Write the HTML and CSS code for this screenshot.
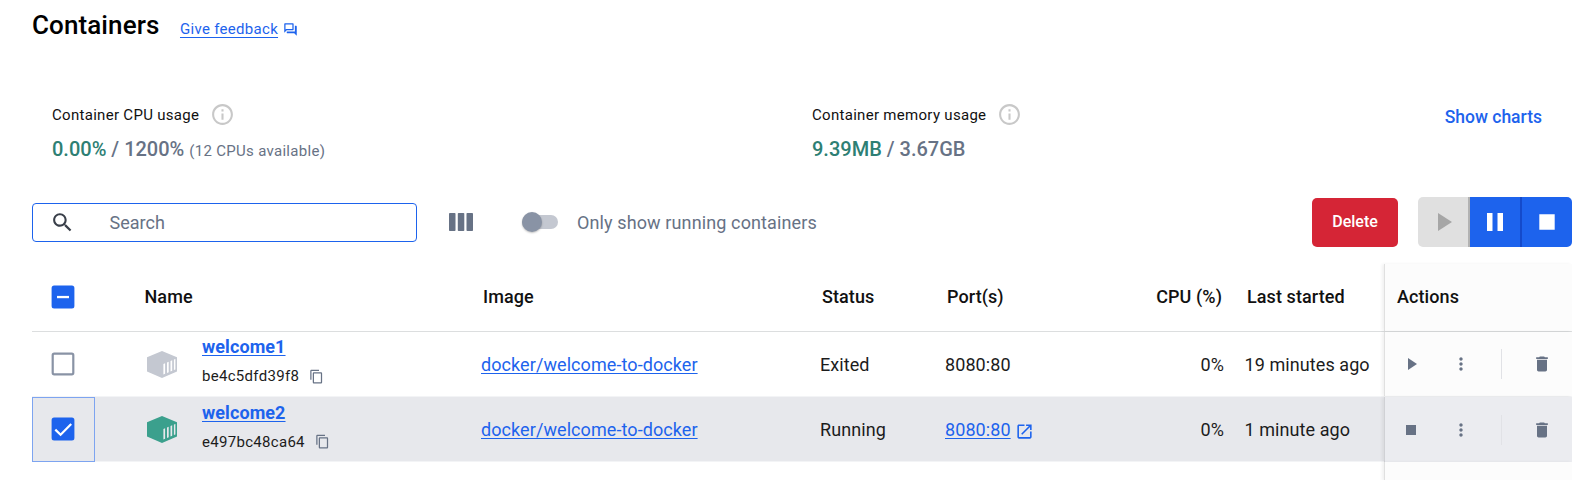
FILE: index.html
```
<!DOCTYPE html>
<html lang="en">
<head>
<meta charset="utf-8">
<title>Containers</title>
<link rel="stylesheet" href="styles.css">
</head>
<body>
<svg class="sprite" aria-hidden="true">
  <symbol id="info" viewBox="0 0 24 24"><path d="M11 7h2v2h-2zm0 4h2v6h-2zm1-9C6.480 2 2 6.480 2 12s4.480 10 10 10 10-4.480 10-10S17.520 2 12 2zm0 18c-4.410 0-8-3.590-8-8s3.590-8 8-8 8 3.590 8 8-3.590 8-8 8z"/></symbol>
  <symbol id="copy" viewBox="0 0 24 24"><path d="M16 1H4c-1.100 0-2 .9-2 2v14h2V3h12V1zm3 4H8c-1.100 0-2 .9-2 2v14c0 1.100.9 2 2 2h11c1.100 0 2-.9 2-2V7c0-1.100-.9-2-2-2zm0 16H8V7h11v14z"/></symbol>
  <symbol id="box" viewBox="0 0 30 27"><path fill-rule="evenodd" d="M15 0 30 6.200V20.600L15 27 0 20.600V6.200ZM16.400 12.900v10.600l1.700-.7V12.200ZM20 11.400v10.600l1.700-.7V10.700ZM23.500 9.900v10.600l1.700-.7V9.200ZM26.900 8.600v10.400l1.500-.6V8Z"/></symbol>
  <symbol id="trash" viewBox="0 0 24 24"><path d="M6 19c0 1.100.9 2 2 2h8c1.100 0 2-.9 2-2V7H6v12zM19 4h-3.500l-1-1h-5l-1 1H5v2h14V4z"/></symbol>
  <symbol id="more" viewBox="0 0 24 24"><path d="M12 8c1.100 0 2-.9 2-2s-.9-2-2-2-2 .9-2 2 .9 2 2 2zm0 2c-1.100 0-2 .9-2 2s.9 2 2 2 2-.9 2-2-.9-2-2-2zm0 6c-1.100 0-2 .9-2 2s.9 2 2 2 2-.9 2-2-.9-2-2-2z"/></symbol>
</svg>
<main class="page">
  <header class="title-bar">
    <h1 class="title">Containers</h1>
    <a class="feedback" href="#"><span class="feedback-text">Give feedback</span>
      <svg class="feedback-icon" viewBox="0 0 24 24"><path d="M15 4v7H5.170L4 12.170V4h11m1-2H3c-.55 0-1 .45-1 1v14l4-4h10c.55 0 1-.45 1-1V3c0-.55-.45-1-1-1zm5 4h-2v9H6v2c0 .55.45 1 1 1h11l4 4V7c0-.55-.45-1-1-1z"/></svg>
    </a>
  </header>

  <section class="usage">
    <div class="metric metric-cpu">
      <div class="metric-label"><span>Container CPU usage</span><svg class="info"><use href="#info"/></svg></div>
      <div class="metric-value"><span class="used">0.00%</span> / 1200% <span class="note">(12 CPUs available)</span></div>
    </div>
    <div class="metric">
      <div class="metric-label"><span>Container memory usage</span><svg class="info"><use href="#info"/></svg></div>
      <div class="metric-value"><span class="used">9.39MB</span> / 3.67GB</div>
    </div>
    <a class="charts" href="#">Show charts</a>
  </section>

  <section class="toolbar">
    <div class="search">
      <svg class="search-icon" viewBox="0 0 24 24"><path d="M15.500 14h-.79l-.28-.27C15.410 12.590 16 11.110 16 9.500 16 5.910 13.090 3 9.500 3S3 5.910 3 9.500 5.910 16 9.500 16c1.610 0 3.090-.59 4.230-1.570l.27.28v.79l5 4.990L20.490 19l-4.990-5zm-6 0C7.010 14 5 11.990 5 9.500S7.010 5 9.500 5 14 7.010 14 9.500 11.990 14 9.500 14z"/></svg>
      <span class="search-text">Search</span>
    </div>
    <svg class="columns-icon" viewBox="0 0 24 18"><rect width="6.500" height="18" rx=".8"/><rect x="8.800" width="6.500" height="18" rx=".8"/><rect x="17.500" width="6.500" height="18" rx=".8"/></svg>
    <div class="switch"><span class="thumb"></span></div>
    <span class="switch-label">Only show running containers</span>
    <button class="delete"><span>Delete</span></button>
    <div class="group">
      <button class="tool tool-off"><svg viewBox="0 0 50 50"><path d="M20 16v18l14-9z"/></svg></button>
      <button class="tool"><svg viewBox="0 0 50 50"><path d="M17 16h5.500v18H17zM27.500 16H33v18h-5.500z"/></svg></button>
      <button class="tool"><svg viewBox="0 0 50 50"><path d="M17.300 17.300h15.400v15.400H17.300z"/></svg></button>
    </div>
  </section>

  <section class="table">
    <div class="row head">
      <div class="cell check"><svg class="box-icon on" viewBox="0 0 24 24"><rect x=".6" y=".6" width="22.800" height="22.800" rx="2.500"/><path class="mark-fill" d="M6 10.900h12v2.300H6z"/></svg></div>
      <div class="cell name-head"><span>Name</span></div>
      <div class="cell image"><span>Image</span></div>
      <div class="cell status"><span>Status</span></div>
      <div class="cell ports"><span>Port(s)</span></div>
      <div class="cell cpu"><span>CPU (%)</span></div>
      <div class="cell last"><span>Last started</span></div>
      <div class="cell actions"><span>Actions</span></div>
    </div>
    <div class="row">
      <div class="cell check"><svg class="box-icon off" viewBox="0 0 24 24"><rect x="1.700" y="1.700" width="20.600" height="20.600" rx="1.500"/></svg></div>
      <div class="cell name">
        <svg class="cube"><use href="#box"/></svg>
        <div class="ident"><a class="name-link" href="#">welcome1</a><div class="hash"><span>be4c5dfd39f8</span><svg class="copy"><use href="#copy"/></svg></div></div>
      </div>
      <div class="cell image"><a class="link" href="#">docker/welcome-to-docker</a></div>
      <div class="cell status"><span>Exited</span></div>
      <div class="cell ports"><span class="port">8080:80</span></div>
      <div class="cell cpu"><span>0%</span></div>
      <div class="cell last"><span class="ago">19 minutes ago</span></div>
      <div class="cell actions">
        <svg class="act" viewBox="0 0 20 20"><path d="M7 4v12l9-6z"/></svg>
        <svg class="more"><use href="#more"/></svg>
        <i class="sep"></i>
        <svg class="trash"><use href="#trash"/></svg>
      </div>
    </div>
    <div class="row selected">
      <div class="cell check focus"><svg class="box-icon on" viewBox="0 0 24 24"><rect x=".6" y=".6" width="22.800" height="22.800" rx="2.500"/><path class="mark-line" d="M4.300 12.600l5.300 5.200L20.200 7.100"/></svg></div>
      <div class="cell name">
        <svg class="cube running"><use href="#box"/></svg>
        <div class="ident"><a class="name-link" href="#">welcome2</a><div class="hash"><span>e497bc48ca64</span><svg class="copy"><use href="#copy"/></svg></div></div>
      </div>
      <div class="cell image"><a class="link" href="#">docker/welcome-to-docker</a></div>
      <div class="cell status"><span>Running</span></div>
      <div class="cell ports"><a class="link" href="#">8080:80</a><svg class="open" viewBox="0 0 24 24"><path d="M19 19H5V5h7V3H5c-1.110 0-2 .9-2 2v14c0 1.100.89 2 2 2h14c1.100 0 2-.9 2-2v-7h-2v7zM14 3v2h3.590l-9.830 9.830 1.410 1.410L19 6.410V10h2V3h-7z"/></svg></div>
      <div class="cell cpu"><span>0%</span></div>
      <div class="cell last"><span class="ago">1 minute ago</span></div>
      <div class="cell actions">
        <svg class="act" viewBox="0 0 20 20"><path d="M5 5h10v10H5z"/></svg>
        <svg class="more"><use href="#more"/></svg>
        <i class="sep"></i>
        <svg class="trash"><use href="#trash"/></svg>
      </div>
    </div>
    <div class="row filler"><div class="cell actions"></div></div>
  </section>
</main>
</body>
</html>
```
FILE: styles.css
```
* { box-sizing: border-box; }
body { margin: 0; background: #fff; color: #1c1c1c; font-family: Roboto, "Liberation Sans", sans-serif; font-size: 18px; letter-spacing: .08px; }
svg { display: block; flex: none; fill: currentColor; }
a { color: #1d63ed; text-decoration: none; }
button { border: 0; padding: 0; font-family: inherit; color: #fff; }
.sprite { display: none; }
.page { width: 1584px; height: 480px; overflow: hidden; display: flex; flex-direction: column; padding-left: 32px; }

.title-bar { height: 58px; display: flex; align-items: flex-start; }
.title { width: 127.600px; margin: 10px 0 0; font-size: 26px; line-height: 30px; font-weight: 500; color: #000; letter-spacing: .1px; }
.feedback { display: flex; margin: 19px 0 0 20.400px; gap: 5px; font-size: 15px; line-height: 20px; letter-spacing: .3px; }
.feedback-text { text-decoration: underline; text-underline-offset: 3px; text-decoration-thickness: 1px; }
.feedback-icon { width: 15px; height: 15px; margin-top: 3px; }

.usage { height: 139px; display: flex; padding: 45px 42px 0 20px; }
.metric { color: #677285; }
.metric-cpu { width: 760px; }
.metric-label { display: flex; align-items: center; height: 24px; gap: 11px; font-size: 15px; color: #111; letter-spacing: .3px; }
.info { width: 25px; height: 25px; margin-bottom: 1px; color: #c8c8c8; }
.metric-value { height: 28px; line-height: 28px; margin-top: 8px; font-size: 20px; font-weight: 500; white-space: nowrap; letter-spacing: 0; }
.used { color: #2e7f74; }
.note { font-size: 15px; font-weight: 400; letter-spacing: .3px; }
.charts { margin: 2px 0 0 auto; font-size: 17.500px; letter-spacing: 0; line-height: 24px; font-weight: 500; }

.toolbar { height: 65px; display: flex; align-items: flex-start; padding-right: 12px; }
.search { width: 385px; height: 39px; margin-top: 6px; border: 1px solid #1d63ed; border-radius: 4px; display: flex; align-items: center; padding-left: 17px; color: #677285; }
.search-icon { width: 25px; height: 25px; color: #393f49; }
.search-text { margin-left: 34.500px; letter-spacing: 0; }
.columns-icon { width: 24px; height: 18px; margin: 16px 0 0 32px; color: #677285; }
.switch { width: 36px; height: 14px; margin: 18px 0 0 49px; border-radius: 7px; background: #c4c8d1; }
.thumb { display: block; width: 20px; height: 20px; margin-top: -3px; border-radius: 50%; background: #8993a5; box-shadow: 0 1px 2px rgba(0,0,0,.25); }
.switch-label { margin: 14px 0 0 19px; line-height: 24px; letter-spacing: .12px; color: #677285; }
.delete { width: 86px; height: 49px; margin: 1px 20px 0 auto; padding-bottom: 2px; border-radius: 5px; background: #d52536; font-size: 16px; font-weight: 500; }
.group { display: flex; border-radius: 5px; overflow: hidden; }
.tool { width: 52px; height: 50px; background: #1d63ed; border-right: 2px solid #144acb; }
.tool:last-child { width: 50px; border-right: 0; }
.tool-off { background: #e0e0e0; border-right-color: #b2b2b2; color: #a6a6a6; }
.tool svg { width: 50px; height: 50px; }

.table { width: 1540px; height: 218px; display: flex; flex-direction: column; }
.row { flex: none; display: grid; grid-template-columns: 63px 386px 339px 125px 210px 69px 160px 188px; height: 65px; border-bottom: 1px solid #f3f4f6; }
.head { height: 70px; border-bottom-color: #dcdedf; font-weight: 500; color: #111; }
.selected { background: #e7e8ec; }
.cell { display: flex; align-items: center; white-space: nowrap; }
.check { justify-content: center; padding-right: 1px; }
.focus { border: 1px solid #7da4f0; height: 65px; padding-bottom: 1px; }
.box-icon { width: 24px; height: 24px; }
.on { fill: #1d63ed; }
.off { fill: none; stroke: #8993a5; stroke-width: 2.200; }
.mark-fill { fill: #fff; }
.mark-line { fill: none; stroke: #fff; stroke-width: 2.200; }
.name-head { padding-left: 49.500px; }
.name { padding-left: 52px; }
.cube { width: 30px; height: 27px; color: #c4c8d1; }
.running { color: #3ba08d; }
.ident { margin-left: 25px; height: 64px; padding-top: 3px; }
.name-link { display: block; font-weight: 700; line-height: 24px; text-decoration: underline; text-underline-offset: 2px; text-decoration-thickness: 1px; }
.hash { display: flex; align-items: center; gap: 10px; height: 24px; margin-top: 5px; font-size: 15px; letter-spacing: .3px; }
.copy { width: 15px; height: 15px; color: #677285; }
.link { text-decoration: underline; text-underline-offset: 2px; text-decoration-thickness: 1px; }
.head .image, .head .status, .head .ports { padding-left: 2px; }
.cpu { justify-content: flex-end; }
.head .cpu { padding-right: 2px; }
.last { padding-left: 20.500px; }
.head .last { padding-left: 23px; }
.open { width: 19px; height: 19px; margin: 3px 0 0 4px; color: #1d63ed; }
.actions { grid-column: 8; color: #677285; background: #fcfcfc; border-left: 1px solid #e0e0e0; box-shadow: -2px 0 3px rgba(0,0,0,.06); }
.head .actions { margin-top: 2px; padding: 0 0 2px 12px; color: #111; }
.selected .actions { background: #ebecf0; border-left-color: #d0d1d5; }
.act { width: 20px; height: 20px; margin-left: 16px; }
.more { width: 20px; height: 20px; margin-left: 30px; }
.sep { width: 1px; height: 30px; margin-left: 30px; background: #e1e2e6; }
.trash { width: 20px; height: 20px; margin-left: 30px; }
.filler { height: 19px; border: 0; }
```
